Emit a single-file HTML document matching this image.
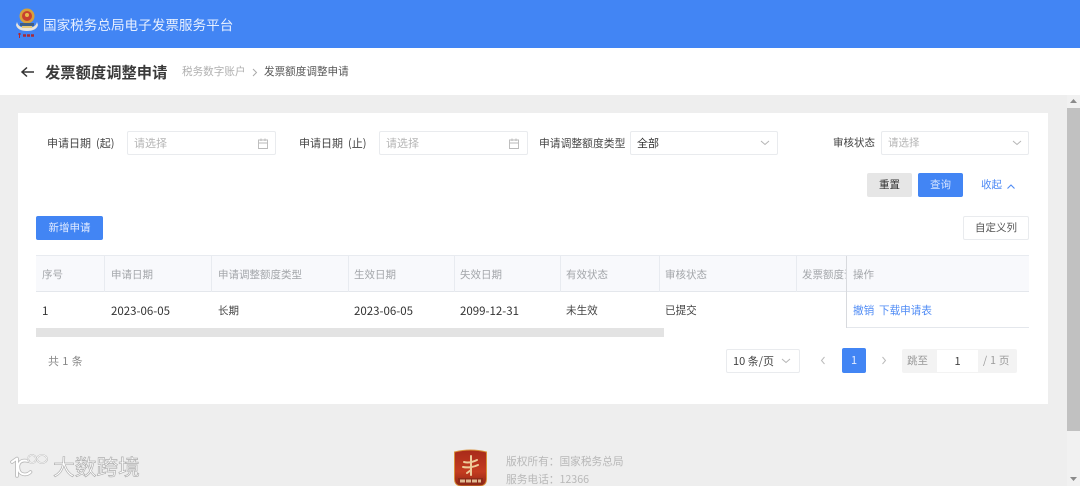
<!DOCTYPE html>
<html lang="zh">
<head>
<meta charset="utf-8">
<title>发票额度调整申请</title>
<style>
html,body{margin:0;padding:0}
body{width:1080px;height:486px;overflow:hidden;position:relative;background:#eeeeee;font-family:"Noto Sans CJK SC","Liberation Sans",sans-serif;font-size:12px;color:#333}
#r{position:absolute;left:0;top:0;width:1080px;height:486px;overflow:hidden;filter:blur(.35px)}
.a,.t{position:absolute;box-sizing:border-box}
.t{white-space:nowrap;line-height:16px;height:16px}
.in{position:absolute;box-sizing:border-box;height:24px;background:#fff;border:1px solid #e9ebee;border-radius:2px}
.ph{color:#b5b5b5}
.th{color:#a3a6aa}
.v{position:absolute;top:256px;height:36px;width:1px;background:#e8ebf0}
.lnk{color:#4f8bf5}
svg{position:absolute;display:block}
</style>
</head>
<body>
<div id="r">
<!-- header -->
<div class="a" style="left:0;top:0;width:1080px;height:48px;background:#4285f4"></div>
<div class="a" style="left:0;top:48px;width:1080px;height:47px;background:#fff"></div>
<svg style="left:15px;top:7px" width="24" height="32" viewBox="0 0 24 32">
<path d="M2 15c1 4 4 6 10 6s9-2 10-6l1 3c-1 4-5 6-11 6S2 22 1 18z" fill="#e8e4dc"/>
<circle cx="12" cy="9" r="7.500" fill="#d8a03a"/>
<circle cx="12" cy="9" r="5" fill="#c8402f"/>
<circle cx="12" cy="8" r="2" fill="#e8b84a"/>
<rect x="5" y="16" width="14" height="3" fill="#3f5f86"/>
<rect x="7" y="19" width="10" height="2" fill="#e6c97a"/>
<path d="M3 27h3M4.500 26v5" stroke="#b8242a" stroke-width="1"/>
<path d="M8 28.500h12" stroke="#a82b38" stroke-width="2.500" stroke-dasharray="3 1"/>
</svg>
<div class="t" style="left:43px;top:15px;height:18px;line-height:18px;font-size:13.600px;color:#e6efff">国家税务总局电子发票服务平台</div>
<svg style="left:20px;top:65px" width="15" height="14" viewBox="0 0 15 14"><path d="M14 7H2M7 2.500 2 7l5 4.500" fill="none" stroke="#333" stroke-width="1.500"/></svg>
<div class="t" style="left:45px;top:62px;height:20px;line-height:20px;font-size:15.300px;font-weight:700;color:#3a3a3a">发票额度调整申请</div>
<div class="t" style="left:182px;top:64px;font-size:10.600px;color:#b0b0b0">税务数字账户</div>
<svg style="left:252px;top:68px" width="6" height="9" viewBox="0 0 6 9"><path d="M1 1l3.500 3.500L1 8" fill="none" stroke="#aaa"/></svg>
<div class="t" style="left:264px;top:64px;font-size:10.600px;color:#555">发票额度调整申请</div>

<!-- scrollbar -->
<div class="a" style="left:1067px;top:95px;width:13px;height:391px;background:#f1f1f1"></div>
<div class="a" style="left:1067px;top:108px;width:13px;height:323px;background:#c1c1c1"></div>
<svg style="left:1069px;top:98px" width="9" height="6" viewBox="0 0 9 6"><path d="M4.500 1 8 5H1z" fill="#8a8a8a"/></svg>
<svg style="left:1069px;top:476px" width="9" height="6" viewBox="0 0 9 6"><path d="M4.500 5 8 1H1z" fill="#8a8a8a"/></svg>

<!-- card -->
<div class="a" style="left:18px;top:113px;width:1030px;height:291px;background:#fff"></div>

<!-- filters -->
<div class="t" style="left:47px;top:135px;font-size:11px;color:#444">申请日期<span style="margin-left:5px">(起)</span></div>
<div class="in" style="left:127px;top:131px;width:149px"></div>
<div class="t ph" style="left:134px;top:135px;font-size:11px">请选择</div>
<svg style="left:258px;top:138px" width="10" height="11" viewBox="0 0 10 11"><path d="M.5 2h9v8.500h-9zM.5 5h9M3 .5v2.500M7 .5v2.500" fill="none" stroke="#b9b9b9" stroke-width=".9"/></svg>

<div class="t" style="left:299px;top:135px;font-size:11px;color:#444">申请日期<span style="margin-left:5px">(止)</span></div>
<div class="in" style="left:379px;top:131px;width:149px"></div>
<div class="t ph" style="left:386px;top:135px;font-size:11px">请选择</div>
<svg style="left:509px;top:138px" width="10" height="11" viewBox="0 0 10 11"><path d="M.5 2h9v8.500h-9zM.5 5h9M3 .5v2.500M7 .5v2.500" fill="none" stroke="#b9b9b9" stroke-width=".9"/></svg>

<div class="t" style="left:539px;top:135px;font-size:10.800px;color:#444">申请调整额度类型</div>
<div class="in" style="left:630px;top:131px;width:148px"></div>
<div class="t" style="left:637px;top:135px;font-size:11px;color:#333">全部</div>
<svg style="left:760px;top:140px" width="10" height="6" viewBox="0 0 10 6"><path d="M1 1l4 3.500L9 1" fill="none" stroke="#b5b5b5"/></svg>

<div class="t" style="left:833px;top:135px;font-size:10.500px;color:#444">审核状态</div>
<div class="in" style="left:881px;top:131px;width:148px"></div>
<div class="t ph" style="left:888px;top:135px;font-size:10.500px">请选择</div>
<svg style="left:1012px;top:140px" width="10" height="6" viewBox="0 0 10 6"><path d="M1 1l4 3.500L9 1" fill="none" stroke="#b5b5b5"/></svg>

<!-- buttons -->
<div class="a" style="left:867px;top:173px;width:45px;height:24px;background:#e6e6e6;border-radius:2px;text-align:center;line-height:24px;font-size:10.500px;color:#333">重置</div>
<div class="a" style="left:918px;top:173px;width:45px;height:24px;background:#4285f4;border-radius:2px;text-align:center;line-height:24px;font-size:10.500px;color:#d5e4ff">查询</div>
<div class="t lnk" style="left:981px;top:177px;font-size:10.500px">收起</div>
<svg style="left:1006px;top:183px" width="10" height="7" viewBox="0 0 10 7"><path d="M1.500 5.500 5 2l3.500 3.500" fill="none" stroke="#4f8bf5" stroke-width="1.100"/></svg>

<div class="a" style="left:36px;top:216px;width:67px;height:24px;background:#4285f4;border-radius:2px;text-align:center;line-height:24px;font-size:10.500px;color:#e3ecff">新增申请</div>
<div class="a" style="left:963px;top:216px;width:66px;height:24px;background:#fff;border:1px solid #e9ebee;border-radius:2px;text-align:center;line-height:22px;font-size:10.500px;color:#555">自定义列</div>

<!-- table -->
<div class="a" style="left:36px;top:256px;width:993px;height:36px;background:#f8f9fc"></div>
<div class="a" style="left:36px;top:255px;width:993px;height:1px;background:#e8ebf0"></div>
<div class="a" style="left:36px;top:291px;width:993px;height:1px;background:#e4e7ec"></div>
<div class="a" style="left:846px;top:327px;width:183px;height:1px;background:#e4e7ec"></div>
<div class="v" style="left:104px"></div>
<div class="v" style="left:211px"></div>
<div class="v" style="left:348px"></div>
<div class="v" style="left:454px"></div>
<div class="v" style="left:560px"></div>
<div class="v" style="left:659px"></div>
<div class="v" style="left:796px"></div>
<div class="a" style="left:846px;top:256px;width:1px;height:72px;background:#d8dade"></div>

<div class="t th" style="left:42px;top:267px;font-size:10.500px">序号</div>
<div class="t th" style="left:111px;top:267px;font-size:10.500px">申请日期</div>
<div class="t th" style="left:218px;top:267px;font-size:10.500px">申请调整额度类型</div>
<div class="t th" style="left:354px;top:267px;font-size:10.500px">生效日期</div>
<div class="t th" style="left:460px;top:267px;font-size:10.500px">失效日期</div>
<div class="t th" style="left:566px;top:267px;font-size:10.500px">有效状态</div>
<div class="t th" style="left:665px;top:267px;font-size:10.500px">审核状态</div>
<div class="a" style="left:802px;top:267px;width:44px;height:16px;overflow:hidden;white-space:nowrap;line-height:16px;font-size:10.500px;color:#a3a6aa">发票额度调整</div>
<div class="t th" style="left:853px;top:267px;font-size:10.500px">操作</div>

<div class="t" style="left:42px;top:303px;font-size:11.500px;color:#333">1</div>
<div class="t" style="left:111px;top:303px;font-size:11.500px;color:#333">2023-06-05</div>
<div class="t" style="left:218px;top:303px;font-size:10.500px;color:#444">长期</div>
<div class="t" style="left:354px;top:303px;font-size:11.500px;color:#333">2023-06-05</div>
<div class="t" style="left:460px;top:303px;font-size:11.500px;color:#333">2099-12-31</div>
<div class="t" style="left:566px;top:303px;font-size:10.600px;color:#444">未生效</div>
<div class="t" style="left:665px;top:303px;font-size:10.600px;color:#444">已提交</div>
<div class="t lnk" style="left:853px;top:303px;font-size:10.600px">撤销</div>
<div class="t lnk" style="left:879px;top:303px;font-size:10.600px">下载申请表</div>

<!-- h scrollbar -->
<div class="a" style="left:36px;top:328px;width:628px;height:9px;background:#e3e3e3"></div>

<!-- pagination -->
<div class="t" style="left:48px;top:353px;font-size:11px;color:#888;letter-spacing:.4px">共 1 条</div>
<div class="in" style="left:726px;top:349px;width:74px;height:24px"></div>
<div class="t" style="left:733px;top:353px;font-size:11px;color:#444">10 条/页</div>
<svg style="left:781px;top:358px" width="10" height="6" viewBox="0 0 10 6"><path d="M1 1l4 3.500L9 1" fill="none" stroke="#b5b5b5"/></svg>
<svg style="left:820px;top:356px" width="6" height="9" viewBox="0 0 6 9"><path d="M4.500 1 1.500 4.500l3 3.500" fill="none" stroke="#bbb"/></svg>
<div class="a" style="left:842px;top:348px;width:24px;height:25px;background:#4285f4;border-radius:2px;text-align:center;line-height:25px;font-size:11px;color:#e3ecff">1</div>
<svg style="left:881px;top:356px" width="6" height="9" viewBox="0 0 6 9"><path d="M1.500 1l3 3.500-3 3.500" fill="none" stroke="#bbb"/></svg>
<div class="a" style="left:902px;top:349px;width:115px;height:24px;background:#f3f3f3;border-radius:2px"></div>
<div class="t" style="left:907px;top:353px;font-size:10.500px;color:#999">跳至</div>
<div class="a" style="left:937px;top:350px;width:41px;height:22px;background:#fff;text-align:center;line-height:22px;font-size:11px;color:#444">1</div>
<div class="t" style="left:983px;top:353px;font-size:10.500px;color:#999;letter-spacing:.3px">/ 1 页</div>

<!-- footer -->
<svg style="left:453px;top:449px" width="35" height="37" viewBox="0 0 35 37">
<defs><linearGradient id="g" x1="0" y1="0" x2="0" y2="1"><stop offset="0" stop-color="#a82a1a"/><stop offset=".6" stop-color="#c43c20"/><stop offset="1" stop-color="#8e2515"/></linearGradient></defs>
<path d="M1.500 3Q17.500-1 33.500 3V30Q33.500 37 26 37H9Q1.500 37 1.500 30Z" fill="url(#g)" stroke="#d9903a" stroke-width="1"/>
<path d="M11 13c4 1 9 0 13-2M10 18c5 1 11 0 15-2M18 7v19M14 24l4-3" fill="none" stroke="#eecb9a" stroke-width="2" stroke-linecap="round"/>
<rect x="5" y="29" width="25" height="6" fill="#8e2a18"/>
<path d="M7 32h21" stroke="#e0b890" stroke-width="3" stroke-dasharray="5 1"/>
</svg>
<div class="t" style="left:506px;top:454px;font-size:10.700px;color:#b8b8b8">版权所有：国家税务总局</div>
<div class="t" style="left:506px;top:472px;font-size:10.700px;color:#b8b8b8">服务电话：12366</div>

<!-- watermark -->
<svg style="left:8px;top:449px" width="44" height="32" viewBox="0 0 44 32">
<g fill="none" stroke-linecap="round" stroke-linejoin="round">
<path d="M4 13 9 9.500V27M20 12C12 10 9.500 15 10.500 20c1 6 8 7 12 3" stroke="#b8b8b8" stroke-width="3.600"/>
<path d="M4 13 9 9.500V27M20 12C12 10 9.500 15 10.500 20c1 6 8 7 12 3" stroke="#fff" stroke-width="2"/>
<circle cx="24" cy="10" r="4" stroke="#bdbdbd" stroke-width="1.800"/>
<circle cx="24" cy="10" r="4" stroke="#fff" stroke-width=".7"/>
<ellipse cx="34" cy="10" rx="5" ry="4" stroke="#bdbdbd" stroke-width="1.800"/>
<ellipse cx="34" cy="10" rx="5" ry="4" stroke="#fff" stroke-width=".7"/>
</g>
</svg>
<div class="t" style="left:53px;top:455px;height:24px;line-height:24px;font-size:21.700px;color:#fff;-webkit-text-stroke:.7px #b0b0b0">大数跨境</div>
</div>
</body>
</html>
